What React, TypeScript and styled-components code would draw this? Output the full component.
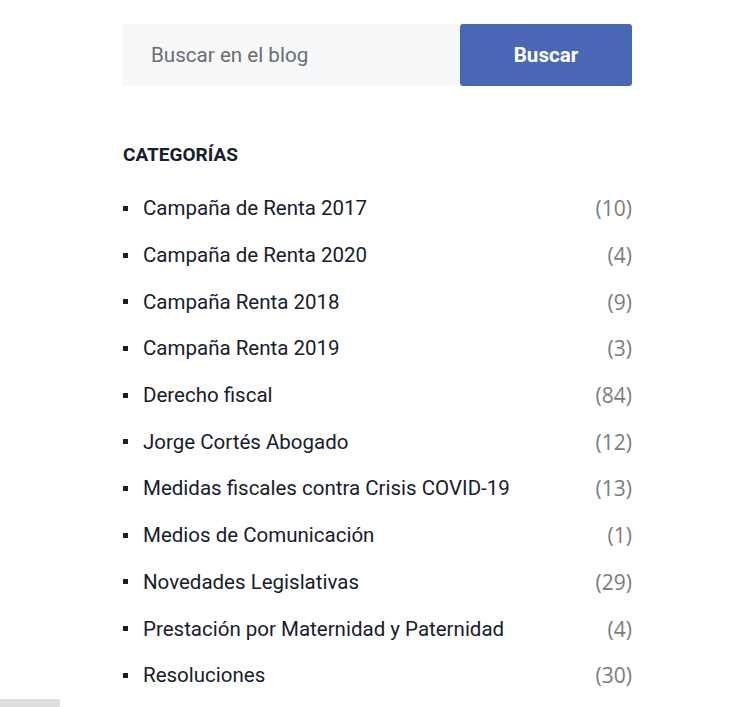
import React from "react";
import styled, { createGlobalStyle } from "styled-components";

const Global = createGlobalStyle`
  html, body { margin: 0; padding: 0; background: #ffffff; }
  body { font-family: Roboto, "Liberation Sans", sans-serif; overflow: hidden; }
`;

const Page = styled.div`
  display: flex;
  flex-direction: column;
  min-height: 707px;
`;

const Sidebar = styled.aside`
  width: 510px;
  margin-left: 122px;
  padding-top: 24px;
  display: flex;
  flex-direction: column;
`;

const SearchForm = styled.form`
  display: flex;
  height: 62px;
`;

const SearchInput = styled.input`
  flex: 1;
  min-width: 0;
  border: none;
  outline: none;
  background: #f7f8fa;
  padding: 0 0 0 29px;
  font-family: Roboto, "Liberation Sans", sans-serif;
  font-size: 20.6px;
  color: #333;
  &::placeholder { color: #6b6e72; }
`;

const SearchButton = styled.button`
  width: 172px;
  border: none;
  border-radius: 3px;
  background: #4a67b6;
  color: #ffffff;
  font-family: Roboto, "Liberation Sans", sans-serif;
  font-weight: 700;
  font-size: 20.6px;
  cursor: pointer;
`;

const Heading = styled.h3`
  margin: 57px 0 0 1px;
  font-size: 19px;
  line-height: 24px;
  font-weight: 700;
  color: #15202b;
`;

const List = styled.ul`
  list-style: none;
  margin: 18px 0 0 0;
  padding: 0;
  display: flex;
  flex-direction: column;
`;

const Item = styled.li`
  height: 46.7px;
  display: flex;
  align-items: center;
  justify-content: space-between;
  font-size: 20.5px;
  color: #15202b;
`;

const Label = styled.span`
  display: flex;
  align-items: center;
  gap: 15px;
  &::before {
    content: "";
    width: 5px;
    height: 5px;
    margin-left: 1px;
    background: #15202b;
  }
`;

const Count = styled.span`
  font-family: "Open Sans", "Liberation Sans", sans-serif;
  font-size: 21px;
  color: #7a7d80;
`;

const FooterStub = styled.div`
  width: 60px;
  height: 10px;
  margin-top: 0.6px;
  background: #dedede;
`;

const categories: [string, number][] = [
  ["Campaña de Renta 2017", 10],
  ["Campaña de Renta 2020", 4],
  ["Campaña Renta 2018", 9],
  ["Campaña Renta 2019", 3],
  ["Derecho fiscal", 84],
  ["Jorge Cortés Abogado", 12],
  ["Medidas fiscales contra Crisis COVID-19", 13],
  ["Medios de Comunicación", 1],
  ["Novedades Legislativas", 29],
  ["Prestación por Maternidad y Paternidad", 4],
  ["Resoluciones", 30],
];

export default function App() {
  return (
    <Page>
      <Global />
      <Sidebar>
        <SearchForm onSubmit={(e) => e.preventDefault()}>
          <SearchInput placeholder="Buscar en el blog" />
          <SearchButton type="submit">Buscar</SearchButton>
        </SearchForm>
        <Heading>CATEGORÍAS</Heading>
        <List>
          {categories.map(([name, n]) => (
            <Item key={name}>
              <Label>{name}</Label>
              <Count>({n})</Count>
            </Item>
          ))}
        </List>
      </Sidebar>
      <FooterStub />
    </Page>
  );
}
